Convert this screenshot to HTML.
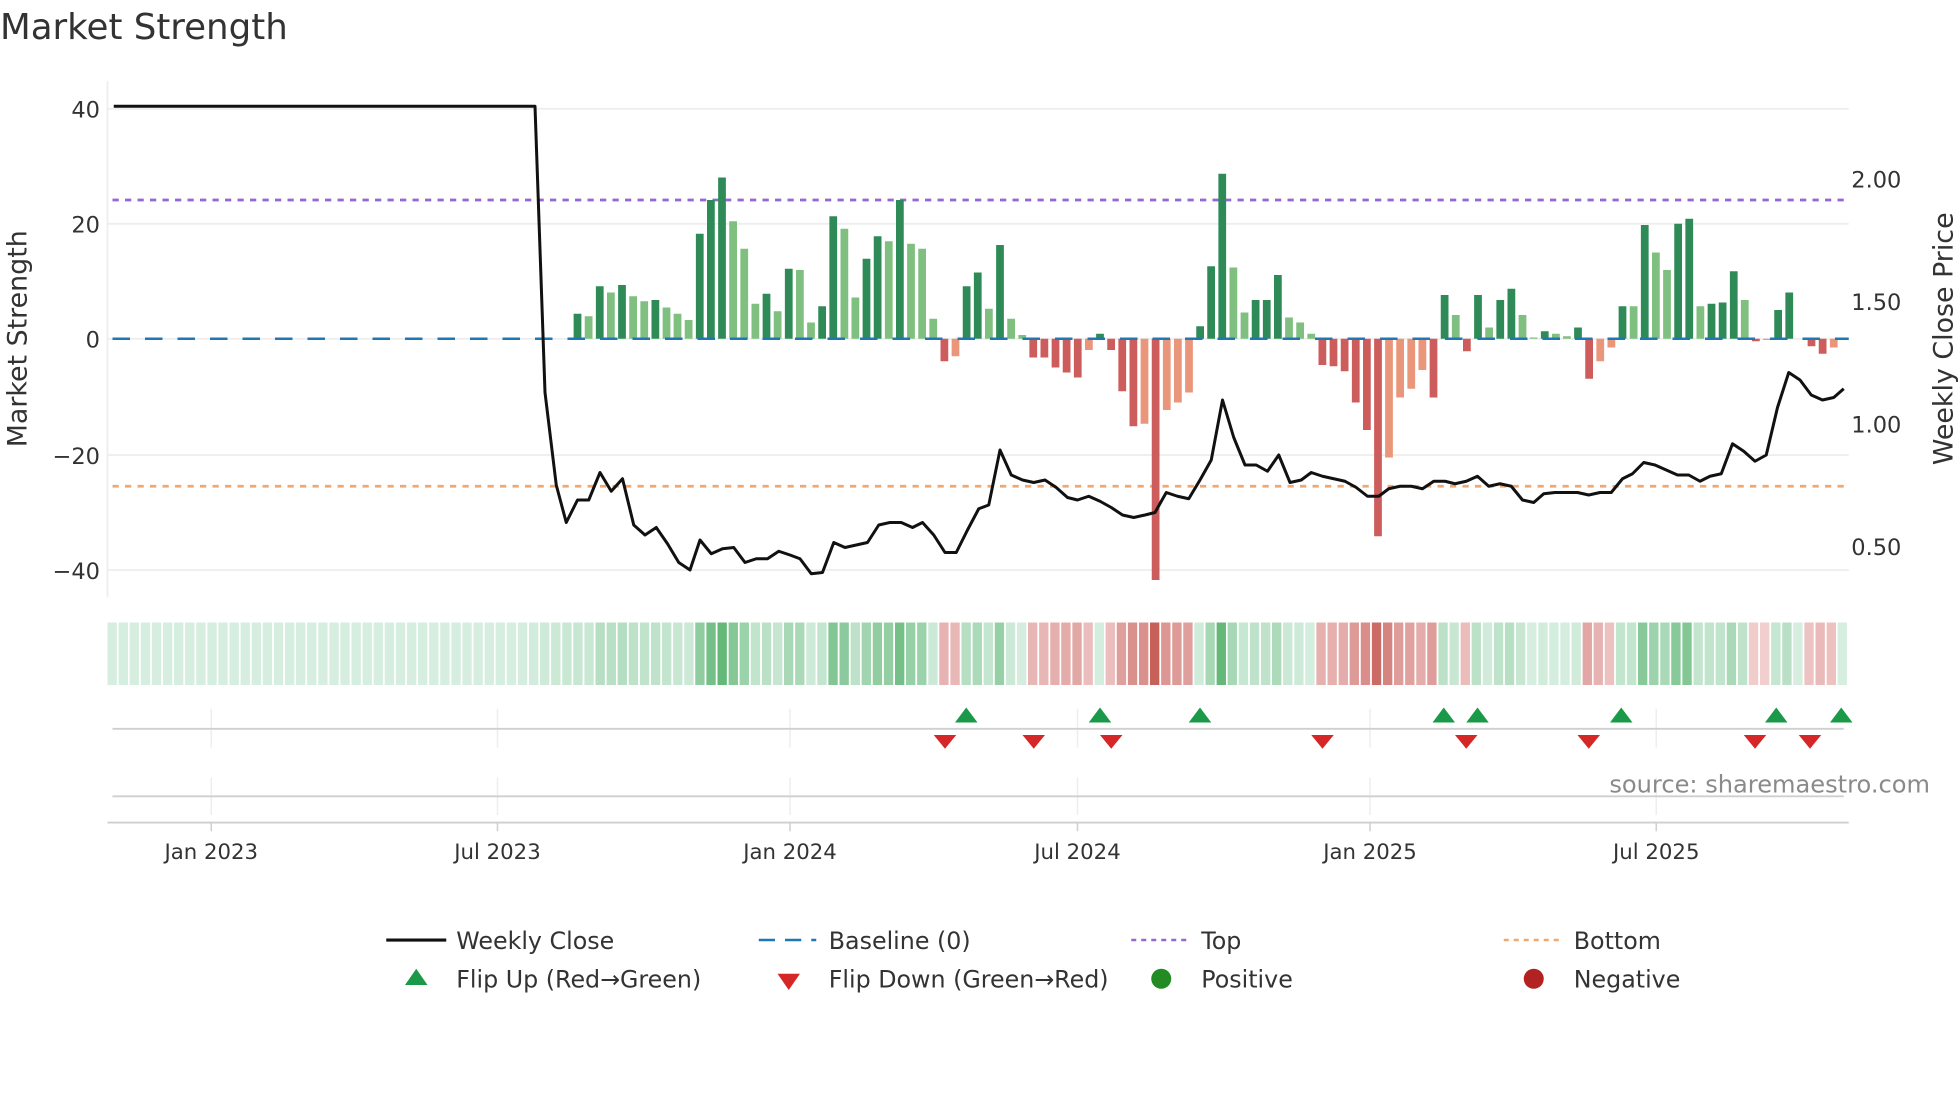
<!DOCTYPE html>
<html><head><meta charset="utf-8">
<style>
html,body{margin:0;padding:0;background:#fff;}
svg{display:block;}
text{font-family:"DejaVu Sans","Liberation Sans",sans-serif;fill:#333;}
</style></head>
<body>
<svg id="s" width="1960" height="1102" viewBox="0 0 1568 881.6" xmlns="http://www.w3.org/2000/svg">
<rect width="1568" height="882" fill="#fff"/>
<text x="0" y="31" font-size="28.5">Market Strength</text>
<g stroke="#eeeeee" stroke-width="1.5">
<line x1="86" y1="87" x2="1479" y2="87"/>
<line x1="86" y1="179" x2="1479" y2="179"/>
<line x1="86" y1="271" x2="1479" y2="271"/>
<line x1="86" y1="364" x2="1479" y2="364"/>
<line x1="86" y1="456" x2="1479" y2="456"/>
<line x1="86" y1="65" x2="86" y2="478"/>
</g>
<g font-size="18" text-anchor="end">
<text x="80" y="94">40</text>
<text x="80" y="186">20</text>
<text x="80" y="278">0</text>
<text x="80" y="371">−20</text>
<text x="80" y="463">−40</text>
</g>
<g font-size="18">
<text x="1481" y="150">2.00</text>
<text x="1481" y="248">1.50</text>
<text x="1481" y="346">1.00</text>
<text x="1481" y="444">0.50</text>
</g>
<text transform="translate(21,271) rotate(-90)" font-size="21.5" text-anchor="middle">Market Strength</text>
<text transform="translate(1562,271) rotate(-90)" font-size="21.5" text-anchor="middle">Weekly Close Price</text>
<line x1="90" y1="160" x2="1479" y2="160" stroke="#9467d4" stroke-width="2.2" stroke-dasharray="5,5"/>
<line x1="90" y1="389" x2="1479" y2="389" stroke="#f0a870" stroke-width="2.2" stroke-dasharray="5,5"/>
<g id="bars"></g>
<line x1="90" y1="271" x2="1479" y2="271" stroke="#1f77b4" stroke-width="2" stroke-dasharray="14,12"/>
<polyline id="pl" fill="none" stroke="#111" stroke-width="2.4" stroke-linejoin="round"/>
<g id="cells"></g>
<g stroke="#eeeeee" stroke-width="1.2">
<line x1="169" y1="567" x2="169" y2="598"/><line x1="398" y1="567" x2="398" y2="598"/><line x1="632" y1="567" x2="632" y2="598"/><line x1="862" y1="567" x2="862" y2="598"/><line x1="1096" y1="567" x2="1096" y2="598"/><line x1="1325" y1="567" x2="1325" y2="598"/>
<line x1="169" y1="622" x2="169" y2="652"/><line x1="398" y1="622" x2="398" y2="652"/><line x1="632" y1="622" x2="632" y2="652"/><line x1="862" y1="622" x2="862" y2="652"/><line x1="1096" y1="622" x2="1096" y2="652"/><line x1="1325" y1="622" x2="1325" y2="652"/>
</g>
<line x1="90" y1="583" x2="1475" y2="583" stroke="#cfcfcf" stroke-width="1.5"/>
<line x1="90" y1="637" x2="1475" y2="637" stroke="#cfcfcf" stroke-width="1.5"/>
<line x1="86" y1="658" x2="1479" y2="658" stroke="#cfcfcf" stroke-width="1.5"/>
<g stroke="#cfcfcf" stroke-width="1.2">
<line x1="169" y1="658" x2="169" y2="665"/><line x1="398" y1="658" x2="398" y2="665"/><line x1="632" y1="658" x2="632" y2="665"/><line x1="862" y1="658" x2="862" y2="665"/><line x1="1096" y1="658" x2="1096" y2="665"/><line x1="1325" y1="658" x2="1325" y2="665"/>
</g>
<g id="mk"></g>
<text x="1544" y="634" font-size="19.3" text-anchor="end" style="fill:#8a8a8a">source: sharemaestro.com</text>
<g font-size="17" text-anchor="middle">
<text x="169" y="687">Jan 2023</text><text x="398" y="687">Jul 2023</text><text x="632" y="687">Jan 2024</text><text x="862" y="687">Jul 2024</text><text x="1096" y="687">Jan 2025</text><text x="1325" y="687">Jul 2025</text>
</g>
<g font-size="19">
<line x1="309" y1="752" x2="357" y2="752" stroke="#111" stroke-width="2.5"/>
<text x="365" y="759">Weekly Close</text>
<line x1="607" y1="752" x2="653" y2="752" stroke="#1f77b4" stroke-width="2" stroke-dasharray="13,8"/>
<text x="663" y="759">Baseline (0)</text>
<line x1="905" y1="752" x2="950" y2="752" stroke="#9467d4" stroke-width="2" stroke-dasharray="4,4"/>
<text x="961" y="759">Top</text>
<line x1="1203" y1="752" x2="1248" y2="752" stroke="#f0a870" stroke-width="2" stroke-dasharray="4,4"/>
<text x="1259" y="759">Bottom</text>
<polygon points="333,775 324,788 342,788" fill="#1a9a48"/>
<text x="365" y="790">Flip Up (Red→Green)</text>
<polygon points="622,779 640,779 631,792" fill="#d62728"/>
<text x="663" y="790">Flip Down (Green→Red)</text>
<circle cx="929" cy="783" r="8" fill="#228b22"/>
<text x="961" y="790">Positive</text>
<circle cx="1227" cy="783" r="8" fill="#b22222"/>
<text x="1259" y="790">Negative</text>
</g>
</svg>
<script>
(function(){
var NS="http://www.w3.org/2000/svg";
function el(p,t,a){var e=document.createElementNS(NS,t);for(var k in a)e.setAttribute(k,a[k]);p.appendChild(e);return e;}
var B=[[251,'D'],[253,'L'],[229,'D'],[234,'L'],[228,'D'],[237,'L'],[241,'L'],[240,'D'],[246,'L'],[251,'L'],[256,'L'],[187,'D'],[160,'D'],[142,'D'],[177,'L'],[199,'L'],[243,'L'],[235,'D'],[249,'L'],[215,'D'],[216,'L'],[258,'L'],[245,'D'],[173,'D'],[183,'L'],[238,'L'],[207,'D'],[189,'D'],[193,'L'],[160,'D'],[195,'L'],[199,'L'],[255,'L'],[289,'R'],[285,'S'],[229,'D'],[218,'D'],[247,'L'],[196,'D'],[255,'L'],[268,'L'],[286,'R'],[286,'R'],[294,'R'],[298,'R'],[302,'R'],[280,'S'],[267,'D'],[280,'R'],[313,'R'],[341,'R'],[339,'S'],[464,'R'],[328,'S'],[322,'S'],[314,'S'],[261,'D'],[213,'D'],[139,'D'],[214,'L'],[250,'L'],[240,'D'],[240,'D'],[220,'D'],[254,'L'],[258,'L'],[267,'L'],[292,'R'],[293,'R'],[297,'R'],[322,'R'],[344,'R'],[429,'R'],[366,'S'],[318,'S'],[311,'S'],[296,'S'],[318,'R'],[236,'D'],[252,'L'],[281,'R'],[236,'D'],[262,'L'],[240,'D'],[231,'D'],[252,'L'],[270,'L'],[265,'D'],[267,'L'],[269,'L'],[262,'D'],[303,'R'],[289,'S'],[278,'S'],[245,'D'],[245,'L'],[180,'D'],[202,'L'],[216,'L'],[179,'D'],[175,'D'],[245,'L'],[243,'D'],[242,'D'],[217,'D'],[240,'L'],[273,'R'],[272,'S'],[248,'D'],[234,'D'],[271,'N'],[277,'R'],[283,'R'],[278,'S']];
var C={D:'#2e8b57',L:'#7fbf7f',R:'#cd5c5c',S:'#e9967a',N:'none'};
var bars=document.getElementById('bars'),cells=document.getElementById('cells');
var n=B.length, bs=(1467-462)/(n-1);
function lerp(a,b,t){var r=[];for(var i=0;i<3;i++)r.push(Math.round(a[i]+(b[i]-a[i])*t));return 'rgb('+r.join(',')+')';}
for(var j=0;j<n;j++){
  if(B[j][1]=='N')continue;
  var top=B[j][0],cx=462+j*bs;
  var y1=Math.min(top,271),h=Math.abs(top-271);
  el(bars,'rect',{x:(cx-3.1).toFixed(1),y:y1,width:6.2,height:Math.max(h,0.8),fill:C[B[j][1]]});
}
var cs=(1479-86)/157;
for(var k=0;k<157;k++){
 var x=86+k*cs, c=x+cs/2;
 var j=Math.round((c-462)/bs);
 var v, col;
 if(j<0){v=Math.max(0,(j+6))*0.8;}
 else if(j>=n){v=0;}
 else v=(271-B[j][0])/4.6;
 if(v>=0){var t=Math.pow(Math.min(1,v/28),1.1);col=lerp([214,238,224],[100,184,120],t);}
 else{var t=Math.sqrt(Math.min(1,-v/42));col=lerp([244,216,216],[200,96,90],t);}
 el(cells,'rect',{x:x.toFixed(1),y:498,width:(cs-1.4).toFixed(2),height:50,fill:col});
}
var P=[[91,85],[428,85],[436,314],[445,388],[453,418],[462,400],[471,400],[480,378],[489,393],[498,383],[507,420],[516,428],[525,422],[534,435],[543,450],[552,456],[560,432],[569,443],[578,439],[587,438],[596,450],[605,447],[614,447],[623,441],[632,444],[640,447],[649,459],[658,458],[667,434],[676,438],[685,436],[694,434],[703,420],[712,418],[721,418],[730,422],[738,418],[747,428],[756,442],[765,442],[774,424],[783,407],[791,404],[800,360],[809,380],[818,384],[827,386],[836,384],[845,390],[854,398],[862,400],[871,397],[880,401],[889,406],[898,412],[907,414],[916,412],[924,410],[933,394],[942,397],[951,399],[960,384],[969,368],[978,320],[987,350],[996,372],[1005,372],[1014,377],[1023,364],[1032,386],[1041,384],[1049,378],[1058,381],[1067,383],[1076,385],[1085,390],[1094,397],[1103,397],[1111,391],[1120,389],[1129,389],[1138,391],[1147,385],[1156,385],[1164,387],[1173,385],[1182,381],[1191,389],[1200,387],[1209,389],[1218,400],[1227,402],[1235,395],[1244,394],[1253,394],[1262,394],[1271,396],[1280,394],[1289,394],[1298,383],[1306,379],[1315,370],[1324,372],[1333,376],[1342,380],[1351,380],[1360,385],[1368,381],[1377,379],[1386,355],[1395,361],[1404,369],[1413,364],[1422,326],[1431,298],[1440,304],[1449,316],[1458,320],[1467,318],[1475,311]];
document.getElementById('pl').setAttribute('points',P.map(function(p){return p.join(',');}).join(' '));
var mk=document.getElementById('mk');
[773,880,960,1155,1182,1297,1421,1473].forEach(function(x){el(mk,'polygon',{points:x+',566 '+(x-9)+',578 '+(x+9)+',578',fill:'#1a9a48'});});
[756,827,889,1058,1173,1271,1404,1448].forEach(function(x){el(mk,'polygon',{points:(x-9)+',588 '+(x+9)+',588 '+x+',599',fill:'#d62728'});});
})();
</script>
</body></html>
